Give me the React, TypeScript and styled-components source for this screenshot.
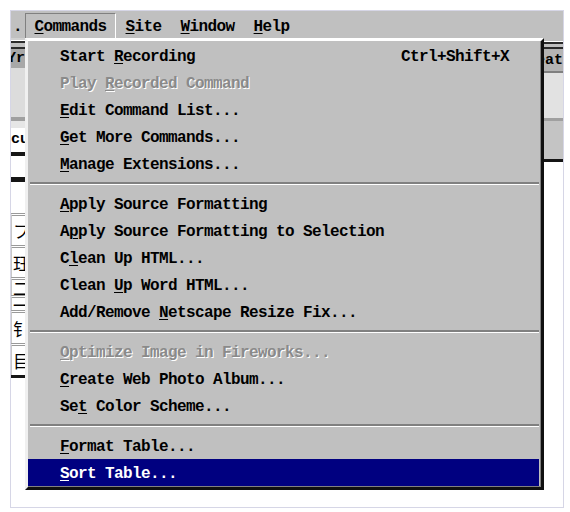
import styled, { createGlobalStyle } from 'styled-components';

const GlobalStyle = createGlobalStyle`
  body {
    margin: 0;
    background: #fff;
  }
`;

const Frame = styled.div`
  margin: 10px 0 0 10px;
  width: 552px;
  height: 496px;
  border: 1px solid #d6d6e6;
  background: #fff;
  display: flex;
  flex-direction: column;
  overflow: hidden;
  font-family: 'Liberation Mono', 'Courier New', monospace;
  font-size: 16px;
  letter-spacing: -0.6px;
  font-weight: bold;
  color: #000;
`;

const MenuBar = styled.div`
  height: 27px;
  flex: none;
  display: flex;
  align-items: flex-end;
  background: #c0c0c0;
`;

const MenuTitle = styled.div<{ $open?: boolean; $clip?: boolean }>`
  height: 25px;
  box-sizing: border-box;
  display: flex;
  align-items: center;
  white-space: pre;
  padding: ${(p) => (p.$clip ? '1px 0 0 1px' : '1px 8.5px 0')};
  width: ${(p) => (p.$clip ? '14px' : 'auto')};
  border: 1px solid transparent;
  border-bottom: none;
  border-color: ${(p) => (p.$open ? '#808080 #ffffff transparent #808080' : 'transparent')};
`;

const Mnemonic = styled.u`
  text-decoration-thickness: 1px;
  text-underline-offset: 2px;
`;

const Body = styled.div`
  flex: 1;
  display: flex;
  min-height: 0;
`;

const Strip = styled.div<{ $w: number }>`
  width: ${(p) => p.$w}px;
  flex: none;
  display: flex;
  flex-direction: column;
  overflow: hidden;
`;

const Band = styled.div<{ $h: number; $bg: string; $align?: string }>`
  height: ${(p) => p.$h}px;
  flex: none;
  background: ${(p) => p.$bg};
  display: flex;
  align-items: center;
  justify-content: ${(p) => p.$align ?? 'flex-start'};
  overflow: hidden;
  white-space: pre;
  font-size: 15px;
  letter-spacing: 0;
  line-height: 1;
`;

const Grip = styled.div<{ $h: number }>`
  height: ${(p) => p.$h}px;
  flex: none;
  box-sizing: border-box;
  background: #c0c0c0;
  border-top: 2px solid #2a2a2a;
  border-bottom: 2px solid #2a2a2a;
  margin-top: 1px;
`;

const Cell = styled.div<{ $h: number }>`
  height: ${(p) => p.$h}px;
  flex: none;
  box-sizing: border-box;
  background: #fff;
  border-top: 3px double #9a9a9a;
  border-left: 1px solid #c8c8c8;
  display: flex;
  align-items: center;
  overflow: hidden;
  padding-left: 1px;
  font-family: 'Noto Sans CJK SC', sans-serif;
  font-weight: normal;
  font-size: 17px;
  letter-spacing: 0;
  line-height: 1;
`;

const Filler = styled.div`
  flex: 1;
  background: #fff;
`;

const MenuColumn = styled.div`
  width: 519px;
  flex: none;
  display: flex;
  flex-direction: column;
`;

const Menu = styled.div`
  box-sizing: border-box;
  height: 452px;
  flex: none;
  padding: 1px 2px 1px 0;
  background: #c0c0c0;
  border: 3px solid;
  border-color: #ffffff #101010 #101010 #f0f0f0;
  box-shadow: inset -1px -1px 0 #808080;
  display: flex;
  flex-direction: column;
`;

const Row = styled.div<{ $disabled?: boolean; $active?: boolean }>`
  height: 27px;
  flex: none;
  box-sizing: border-box;
  display: flex;
  align-items: center;
  justify-content: space-between;
  padding: 2px 30px 0 32px;
  white-space: pre;
  background: ${(p) => (p.$active ? '#000080' : 'transparent')};
  color: ${(p) => (p.$active ? '#ffffff' : p.$disabled ? '#8a8a8a' : '#000000')};
  text-shadow: ${(p) => (p.$disabled ? '1px 1px 0 #ffffff' : 'none')};
`;

const Separator = styled.div`
  height: 13px;
  flex: none;
  box-sizing: border-box;
  padding-top: 5px;
  margin: 0 0 0 2px;
  &::after {
    content: '';
    display: block;
    border-top: 2px solid #808080;
    border-bottom: 1px solid #ffffff;
  }
`;

type Item =
  | { label: string; key: number; shortcut?: string; disabled?: boolean; active?: boolean }
  | 'sep';

const items: Item[] = [
  { label: 'Start Recording', key: 6, shortcut: 'Ctrl+Shift+X' },
  { label: 'Play Recorded Command', key: 5, disabled: true },
  { label: 'Edit Command List...', key: 0 },
  { label: 'Get More Commands...', key: 0 },
  { label: 'Manage Extensions...', key: 0 },
  'sep',
  { label: 'Apply Source Formatting', key: 0 },
  { label: 'Apply Source Formatting to Selection', key: 1 },
  { label: 'Clean Up HTML...', key: 1 },
  { label: 'Clean Up Word HTML...', key: 6 },
  { label: 'Add/Remove Netscape Resize Fix...', key: 11 },
  'sep',
  { label: 'Optimize Image in Fireworks...', key: 0, disabled: true },
  { label: 'Create Web Photo Album...', key: 0 },
  { label: 'Set Color Scheme...', key: 2 },
  'sep',
  { label: 'Format Table...', key: 0 },
  { label: 'Sort Table...', key: 0, active: true },
];

const Label = ({ text, k }: { text: string; k: number }) => (
  <span>
    {text.slice(0, k)}
    <Mnemonic>{text[k]}</Mnemonic>
    {text.slice(k + 1)}
  </span>
);

const App = () => {
  return (
    <>
      <GlobalStyle />
      <Frame>
        <MenuBar>
          <MenuTitle $clip>.</MenuTitle>
          <MenuTitle $open>
            <Label text="Commands" k={0} />
          </MenuTitle>
          <MenuTitle>
            <Label text="Site" k={0} />
          </MenuTitle>
          <MenuTitle>
            <Label text="Window" k={0} />
          </MenuTitle>
          <MenuTitle>
            <Label text="Help" k={0} />
          </MenuTitle>
        </MenuBar>
        <Body>
          <Strip $w={14}>
            <Band $h={2} $bg="#d0d0d0" />
            <Grip $h={8} />
            <Band $h={19} $bg="#a8a8a8" $align="flex-end">
              Yr
            </Band>
            <Band $h={49} $bg="#dcdcdc" />
            <Band $h={4} $bg="#a0a0a0" />
            <Band $h={7} $bg="#e6e6e6" />
            <Band $h={22} $bg="#ffffff">
              cu
            </Band>
            <Band $h={2} $bg="#ffffff" />
            <Band $h={4} $bg="#151515" />
            <Band $h={21} $bg="#ffffff" />
            <Band $h={5} $bg="#151515" />
            <Band $h={31} $bg="#ffffff" />
            <Cell $h={32}>フ</Cell>
            <Cell $h={32}>玨</Cell>
            <Cell $h={18}>二</Cell>
            <Cell $h={15}>一</Cell>
            <Cell $h={33}>钅</Cell>
            <Cell $h={32}>目</Cell>
            <Band $h={3} $bg="#151515" />
            <Filler />
          </Strip>
          <MenuColumn>
            <Menu>
              {items.map((it, i) =>
                it === 'sep' ? (
                  <Separator key={i} />
                ) : (
                  <Row key={i} $disabled={it.disabled} $active={it.active}>
                    <Label text={it.label} k={it.key} />
                    {it.shortcut && <span>{it.shortcut}</span>}
                  </Row>
                )
              )}
            </Menu>
            <Filler />
          </MenuColumn>
          <Strip $w={19}>
            <Band $h={3} $bg="#c0c0c0" />
            <Grip $h={7} />
            <Band $h={22} $bg="#b4b4b4" $align="flex-end">
              eat
            </Band>
            <Band $h={2} $bg="#808080" />
            <Band $h={45} $bg="#e2e2e2" />
            <Band $h={3} $bg="#a0a0a0" />
            <Band $h={38} $bg="#c4c4c4" />
            <Band $h={3} $bg="#151515" />
            <Filler />
          </Strip>
        </Body>
      </Frame>
    </>
  );
};

export default App;
